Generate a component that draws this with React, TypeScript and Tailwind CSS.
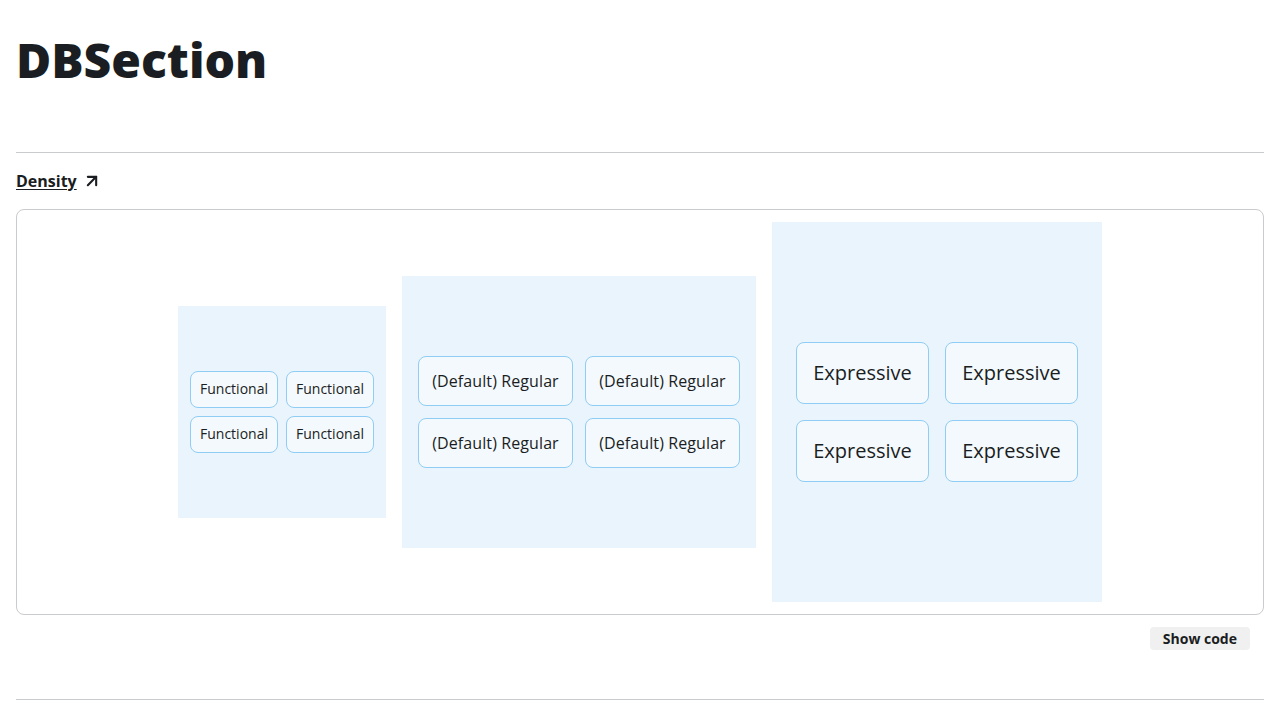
import { ArrowUpRight } from 'lucide-react';

const Btn = ({ label, className }: { label: string; className: string }) => (
  <button
    className={`rounded-lg border border-[#90cdf4] bg-[#f4f9fe] text-[#1a1d21] ${className}`}
  >
    {label}
  </button>
);

const Box = ({
  label,
  box,
  grid,
  btn,
}: {
  label: string;
  box: string;
  grid: string;
  btn: string;
}) => (
  <div className={`flex items-center justify-center bg-[#eaf4fd] ${box}`}>
    <div className={`grid grid-cols-2 ${grid}`}>
      {[0, 1, 2, 3].map((i) => (
        <Btn key={i} label={label} className={btn} />
      ))}
    </div>
  </div>
);

export default function App() {
  return (
    <div className="min-h-screen bg-white px-4 font-['Open_Sans',sans-serif] text-[#1a1d21]">
      <h1 className="pt-[36px] text-5xl leading-none font-extrabold">DBSection</h1>
      <hr className="mt-[68px] border-t border-[#c9cbcf]" />
      <a href="#" className="mt-[17px] flex h-[22px] items-center gap-[5px] text-base font-bold">
        <span className="underline underline-offset-2">Density</span>
        <ArrowUpRight className="size-5" strokeWidth={2.5} />
      </a>
      <div className="mt-[17px] flex items-center justify-center gap-4 rounded-lg border border-[#c9cbcf] p-3">
        <Box
          label="Functional"
          box="h-[212px] w-[208px]"
          grid="gap-x-2 gap-y-2"
          btn="h-[37px] w-[88px] pb-px text-sm"
        />
        <Box
          label="(Default) Regular"
          box="h-[272px] w-[354px]"
          grid="gap-x-3 gap-y-3"
          btn="h-[50px] w-[155px] text-base tracking-[0.1px]"
        />
        <Box
          label="Expressive"
          box="h-[380px] w-[330px]"
          grid="gap-x-4 gap-y-4"
          btn="h-[62px] w-[133px] text-xl"
        />
      </div>
      <div className="mt-[12px] flex justify-end pr-[14px]">
        <button className="h-[23px] rounded bg-[#f0f0f0] px-[13px] text-sm font-bold">Show code</button>
      </div>
      <hr className="mt-[49px] border-t border-[#c9cbcf]" />
    </div>
  );
}
